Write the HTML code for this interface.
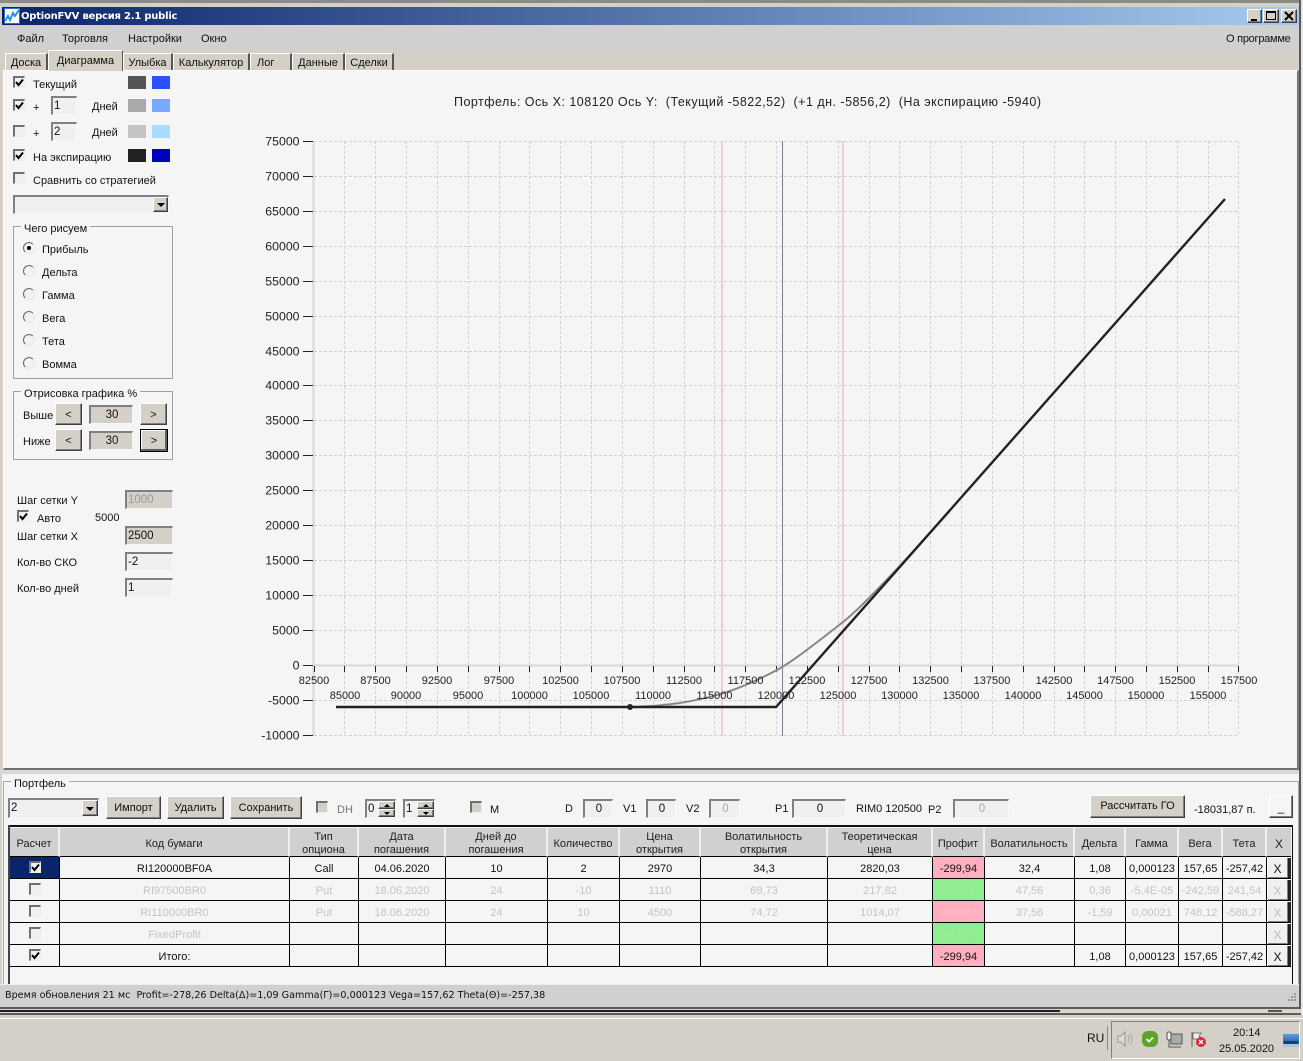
<!DOCTYPE html>
<html><head><meta charset="utf-8"><title>OptionFVV</title>
<style>
html,body{margin:0;padding:0}
body{position:relative;width:1303px;height:1061px;overflow:hidden;background:#d4d0c8;font:11px "Liberation Sans",sans-serif;color:#111}
div,span.a{position:absolute;box-sizing:border-box}
.t{position:absolute;white-space:nowrap;line-height:15px;margin-top:1px}
.in{background:#f0f0f0;border:1px solid #f8f8f8;border-top:2px solid #808080;border-left:2px solid #808080;line-height:17px;padding-left:1px;font-size:11.5px;white-space:nowrap}
.g{background:#d4d0c8}
.btn{background:#d4d0c8;border:1px solid;border-color:#fff #404040 #404040 #fff;box-shadow:inset -1px -1px 0 #808080;text-align:center;white-space:nowrap}
.cb{width:12px;height:12px;background:#f0f0f0;border:1px solid #eee;border-top:2px solid #707070;border-left:2px solid #707070}
.cb svg{position:absolute;left:0;top:0}
.r{width:12px;height:12px;border-radius:50%;background:#f2f2f2;border:1px solid;border-color:#666 #e8e8e8 #e8e8e8 #666}
.tab{top:53px;height:18px;border-top:1px solid #fff;border-left:1px solid #fff;border-right:2px solid #555;text-align:center;line-height:19px;background:#d4d0c8}
.gb{border:1px solid #a0a0a0}
.lg{background:#f5f5f5;padding:0 3px;white-space:nowrap}
table{position:absolute;left:10px;top:828px;border-collapse:separate;border-spacing:0;table-layout:fixed;width:1281px;font-size:11px}
th{font-weight:normal;background:#d0d0d0;height:29px;padding:2px 0 0;border-right:2px solid #f0f0f0;border-bottom:1px solid #000;line-height:13px;box-sizing:border-box;overflow:hidden;color:#222}
th b{font-weight:normal;position:relative;top:1px;display:block}
td{height:22px;padding:2px 0 0;border-right:1px solid #000;border-bottom:1px solid #000;text-align:center;background:#f5f5f5;box-sizing:border-box;white-space:nowrap;overflow:hidden;position:relative}
tr.d td{color:#c4c4c4}
.pk{background:#ffb0c0!important}.gr{background:#90ee90!important}
tr.d td.pk{color:#ffbccb}tr.d td.gr{color:#9eeb9e}
td.x{background:#f0f0f0;border-right:0;border-bottom:1px solid #000;box-shadow:inset 1px 1px 0 #fff,inset -3px 0 0 #222,inset -4px -1px 0 #808080;padding-right:3px;font-size:12px}
tr.d td.x{color:#bbb;background:#f0f0f0}
</style></head><body>

<!-- outer frame -->
<div style="left:0;top:0;width:1303px;height:3px;background:#8a8a86"></div>
<div style="left:0;top:3px;width:1303px;height:3px;background:#d4d0c8"></div>
<div style="left:1299px;top:0;width:2px;height:1018px;background:#5a5a58"></div>
<div style="left:1301px;top:0;width:2px;height:1018px;background:#e8e8e8"></div>
<!-- title -->
<div style="left:2px;top:7px;width:1297px;height:18px;background:linear-gradient(90deg,#0a246a,#a6caf0)"></div>
<svg style="position:absolute;left:4px;top:8px" width="16" height="16"><rect width="16" height="16" fill="#2a6fd8"/><rect x="1" y="1" width="14" height="14" fill="#fff"/><path d="M1 13l3-5 2 4 3-7 2 3 4-6" fill="none" stroke="#2a8fe0" stroke-width="2"/></svg>
<span class="t" style="left:21px;top:10px;color:#fff;font:bold 10px 'DejaVu Sans',sans-serif;letter-spacing:-0.22px">OptionFVV версия 2.1 public</span>
<div class="btn" style="left:1247px;top:9px;width:15px;height:14px"><div style="left:3px;top:9px;width:6px;height:2px;background:#000"></div></div>
<div class="btn" style="left:1263px;top:9px;width:16px;height:14px"><div style="left:2px;top:1px;width:10px;height:9px;border:1px solid #000;border-top-width:2px"></div></div>
<div class="btn" style="left:1281px;top:9px;width:16px;height:14px"><svg style="position:absolute;left:2px;top:1px" width="10" height="10"><path d="M1 1l8 8M9 1l-8 8" stroke="#000" stroke-width="2"/></svg></div>
<!-- menu -->
<div style="left:2px;top:25px;width:1297px;height:25px;background:#d0d0d0"></div>
<span class="t" style="left:17px;top:31px">Файл</span>
<span class="t" style="left:62px;top:31px">Торговля</span>
<span class="t" style="left:128px;top:31px">Настройки</span>
<span class="t" style="left:201px;top:31px">Окно</span>
<span class="t" style="left:1226px;top:31px;letter-spacing:-0.25px">О программе</span>
<!-- tabs -->
<div class="tab" style="left:5px;width:43px">Доска</div>
<div class="tab" style="left:123px;width:50px">Улыбка</div>
<div class="tab" style="left:173px;width:77px">Калькулятор</div>
<div class="tab" style="left:250px;width:42px;text-align:left;padding-left:6px">Лог</div>
<div class="tab" style="left:292px;width:53px">Данные</div>
<div class="tab" style="left:345px;width:49px">Сделки</div>
<div class="tab" style="left:48px;top:50px;width:75px;height:21px;z-index:2;border-right:1px solid #555;line-height:20px">Диаграмма</div>
<!-- main panel -->
<div style="left:3px;top:70px;width:1296px;height:700px;background:#f5f5f5;border-top:1px solid #fff;border-left:1px solid #fff;border-right:2px solid #777;border-bottom:2px solid #707070"></div>

<!-- left controls -->
<div class="cb" style="left:13px;top:76px"><svg width="10" height="10"><path d="M1 4l2.500 3L8 1.500" fill="none" stroke="#000" stroke-width="2"/></svg></div>
<span class="t" style="left:33px;top:77px">Текущий</span>
<div style="left:128px;top:76px;width:18px;height:13px;background:#555"></div><div style="left:152px;top:76px;width:18px;height:13px;background:#2a50ff"></div>

<div class="cb" style="left:13px;top:99px"><svg width="10" height="10"><path d="M1 4l2.500 3L8 1.500" fill="none" stroke="#000" stroke-width="2"/></svg></div>
<span class="t" style="left:33px;top:100px">+</span>
<div class="in" style="left:51px;top:96px;width:26px;height:19px">1</div>
<span class="t" style="left:92px;top:99px">Дней</span>
<div style="left:128px;top:99px;width:18px;height:13px;background:#a9a9a9"></div><div style="left:152px;top:99px;width:18px;height:13px;background:#7aa8ff"></div>

<div class="cb" style="left:13px;top:125px"></div>
<span class="t" style="left:33px;top:126px">+</span>
<div class="in" style="left:51px;top:122px;width:26px;height:19px">2</div>
<span class="t" style="left:92px;top:125px">Дней</span>
<div style="left:128px;top:125px;width:18px;height:13px;background:#c4c4c4"></div><div style="left:152px;top:125px;width:18px;height:13px;background:#aadcff"></div>

<div class="cb" style="left:13px;top:149px"><svg width="10" height="10"><path d="M1 4l2.500 3L8 1.500" fill="none" stroke="#000" stroke-width="2"/></svg></div>
<span class="t" style="left:33px;top:150px">На экспирацию</span>
<div style="left:128px;top:149px;width:18px;height:13px;background:#222"></div><div style="left:152px;top:149px;width:18px;height:13px;background:#0000c0"></div>

<div class="cb" style="left:13px;top:172px"></div>
<span class="t" style="left:33px;top:173px">Сравнить со стратегией</span>
<div class="in" style="left:13px;top:195px;width:156px;height:19px"></div>
<div class="btn" style="left:153px;top:197px;width:15px;height:15px"><div style="left:3px;top:5px;border:4px solid transparent;border-top:4px solid #000;border-bottom:0"></div></div>

<!-- group 1 -->
<div class="gb" style="left:13px;top:226px;width:160px;height:153px"></div>
<div class="lg t" style="left:21px;top:221px">Чего рисуем</div>
<div class="r" style="left:23px;top:242px"><div style="left:3px;top:3px;width:4px;height:4px;border-radius:50%;background:#000"></div></div><span class="t" style="left:42px;top:242px">Прибыль</span>
<div class="r" style="left:23px;top:265px"></div><span class="t" style="left:42px;top:265px">Дельта</span>
<div class="r" style="left:23px;top:288px"></div><span class="t" style="left:42px;top:288px">Гамма</span>
<div class="r" style="left:23px;top:311px"></div><span class="t" style="left:42px;top:311px">Вега</span>
<div class="r" style="left:23px;top:334px"></div><span class="t" style="left:42px;top:334px">Тета</span>
<div class="r" style="left:23px;top:357px"></div><span class="t" style="left:42px;top:357px">Вомма</span>

<!-- group 2 -->
<div class="gb" style="left:13px;top:391px;width:160px;height:69px"></div>
<div class="lg t" style="left:21px;top:386px">Отрисовка графика %</div>
<span class="t" style="left:23px;top:408px">Выше</span>
<div class="btn" style="left:55px;top:403px;width:27px;height:22px;line-height:22px">&lt;</div>
<div class="in g" style="left:89px;top:405px;width:44px;height:19px;text-align:center">30</div>
<div class="btn" style="left:140px;top:403px;width:27px;height:22px;line-height:22px">&gt;</div>
<span class="t" style="left:23px;top:434px">Ниже</span>
<div class="btn" style="left:55px;top:429px;width:27px;height:22px;line-height:22px">&lt;</div>
<div class="in g" style="left:89px;top:431px;width:44px;height:19px;text-align:center">30</div>
<div class="btn" style="left:140px;top:429px;width:28px;height:23px;line-height:22px;border:1px solid #000;box-shadow:inset -2px -2px 0 #606060,inset 1px 1px 0 #fff">&gt;</div>

<span class="t" style="left:17px;top:493px">Шаг сетки Y</span>
<div class="in g" style="left:125px;top:490px;width:48px;height:19px;color:#999">1000</div>
<div class="cb" style="left:17px;top:510px"><svg width="10" height="10"><path d="M1 4l2.500 3L8 1.500" fill="none" stroke="#000" stroke-width="2"/></svg></div>
<span class="t" style="left:37px;top:511px">Авто</span>
<span class="t" style="left:95px;top:510px">5000</span>
<span class="t" style="left:17px;top:529px">Шаг сетки X</span>
<div class="in g" style="left:125px;top:526px;width:48px;height:19px">2500</div>
<span class="t" style="left:17px;top:555px">Кол-во СКО</span>
<div class="in" style="left:125px;top:552px;width:48px;height:19px">-2</div>
<span class="t" style="left:17px;top:581px">Кол-во дней</span>
<div class="in" style="left:125px;top:578px;width:48px;height:19px">1</div>

<!-- chart -->
<svg style="position:absolute;left:0;top:0" width="1303" height="780" font-family="Liberation Sans, sans-serif">
<text x="454" y="106" font-size="12.500" fill="#222" textLength="587" lengthAdjust="spacing" xml:space="preserve">Портфель: Ось X: 108120 Ось Y:  (Текущий -5822,52)  (+1 дн. -5856,2)  (На экспирацию -5940)</text>
<path fill="none" stroke="#d2d2d2" stroke-dasharray="3 2" d="M314 141.500H1239M314 176.500H1239M314 211.500H1239M314 246.500H1239M314 281.500H1239M314 316.500H1239M314 351.500H1239M314 385.500H1239M314 420.500H1239M314 455.500H1239M314 490.500H1239M314 525.500H1239M314 560.500H1239M314 595.500H1239M314 630.500H1239M314 700.500H1239M314 735.500H1239
M344.500 141V735M375.500 141V735M406.500 141V735M437.500 141V735M468.500 141V735M499.500 141V735M529.500 141V735M560.500 141V735M591.500 141V735M622.500 141V735M653.500 141V735M684.500 141V735M714.500 141V735M745.500 141V735M776.500 141V735M807.500 141V735M838.500 141V735M869.500 141V735M899.500 141V735M930.500 141V735M961.500 141V735M992.500 141V735M1023.500 141V735M1054.500 141V735M1084.500 141V735M1115.500 141V735M1146.500 141V735M1177.500 141V735M1208.500 141V735M1238.500 141V735"/>
<path stroke="#d8d8d8" stroke-width="2" d="M313.500 141V736M313 665.500H1239"/>
<path stroke="#222" fill="none" d="M303 141.500h10M303 176.500h10M303 211.500h10M303 246.500h10M303 281.500h10M303 316.500h10M303 351.500h10M303 385.500h10M303 420.500h10M303 455.500h10M303 490.500h10M303 525.500h10M303 560.500h10M303 595.500h10M303 630.500h10M303 665.500h10M303 700.500h10M303 735.500h10
M314.500 666v6M344.500 666v6M375.500 666v6M406.500 666v6M437.500 666v6M468.500 666v6M499.500 666v6M529.500 666v6M560.500 666v6M591.500 666v6M622.500 666v6M653.500 666v6M684.500 666v6M714.500 666v6M745.500 666v6M776.500 666v6M807.500 666v6M838.500 666v6M869.500 666v6M899.500 666v6M930.500 666v6M961.500 666v6M992.500 666v6M1023.500 666v6M1054.500 666v6M1084.500 666v6M1115.500 666v6M1146.500 666v6M1177.500 666v6M1208.500 666v6M1238.500 666v6"/>
<g font-size="12.300" text-anchor="end" fill="#222" transform="translate(0,-0.5)">
<text x="299.500" y="146">75000</text><text x="299.500" y="181">70000</text><text x="299.500" y="216">65000</text><text x="299.500" y="251">60000</text><text x="299.500" y="286">55000</text><text x="299.500" y="321">50000</text><text x="299.500" y="356">45000</text><text x="299.500" y="390">40000</text><text x="299.500" y="425">35000</text><text x="299.500" y="460">30000</text><text x="299.500" y="495">25000</text><text x="299.500" y="530">20000</text><text x="299.500" y="565">15000</text><text x="299.500" y="600">10000</text><text x="299.500" y="635">5000</text><text x="299.500" y="670">0</text><text x="299.500" y="705">-5000</text><text x="299.500" y="740">-10000</text>
</g>
<path d="M722 141V736M843 141V736" stroke="#f4ccd6" stroke-width="2"/>
<path d="M782.500 141V736" stroke="#7d8094" stroke-width="1"/>
<path d="M630 707C670 706 695 701 717 695S760 679 777 670S825 636 843 622S905 561 950 510.500" fill="none" stroke="#a8a8a8" stroke-width="2.200"/>
<path d="M630 707C670 706 695 701 717 695S760 679 777 670S825 636 843 622S905 561 950 510.500" fill="none" stroke="#707070" stroke-width="0.800"/>
<path d="M336 707H776L1225 199" fill="none" stroke="#222" stroke-width="2.400"/>
<circle cx="630" cy="707" r="3" fill="#222"/>
<g font-size="11" text-anchor="middle" fill="#222">
<text x="314" y="684">82500</text><text x="375.500" y="684">87500</text><text x="437" y="684">92500</text><text x="499" y="684">97500</text><text x="560.500" y="684">102500</text><text x="622" y="684">107500</text><text x="684" y="684">112500</text><text x="745.500" y="684">117500</text><text x="807" y="684">122500</text><text x="869" y="684">127500</text><text x="930.500" y="684">132500</text><text x="992" y="684">137500</text><text x="1054" y="684">142500</text><text x="1115.500" y="684">147500</text><text x="1177" y="684">152500</text><text x="1239" y="684">157500</text>
<text x="345" y="699">85000</text><text x="406" y="699">90000</text><text x="468" y="699">95000</text><text x="529.500" y="699">100000</text><text x="591" y="699">105000</text><text x="653" y="699">110000</text><text x="714.500" y="699">115000</text><text x="776" y="699">120000</text><text x="838" y="699">125000</text><text x="899.500" y="699">130000</text><text x="961" y="699">135000</text><text x="1023" y="699">140000</text><text x="1084.500" y="699">145000</text><text x="1146" y="699">150000</text><text x="1208" y="699">155000</text>
</g>
</svg>

<!-- portfolio -->
<div style="left:0;top:770px;width:1299px;height:4px;background:#d8d8d8"></div>
<div style="left:2px;top:774px;width:1297px;height:211px;background:#f5f5f5"></div>
<div style="left:3px;top:781px;width:1296px;height:204px;border-top:1px solid #a8a8a8;border-left:1px solid #a8a8a8;border-right:1px solid #a8a8a8"></div>
<div class="lg t" style="left:11px;top:776px">Портфель</div>

<div class="in" style="left:8px;top:798px;width:91px;height:20px">2</div>
<div class="btn" style="left:82px;top:800px;width:16px;height:16px"><div style="left:3px;top:6px;border:4px solid transparent;border-top:4px solid #000;border-bottom:0"></div></div>
<div class="btn" style="left:106px;top:796px;width:55px;height:23px;line-height:22px">Импорт</div>
<div class="btn" style="left:167px;top:796px;width:57px;height:23px;line-height:22px">Удалить</div>
<div class="btn" style="left:230px;top:796px;width:72px;height:23px;line-height:22px">Сохранить</div>
<div class="cb" style="left:316px;top:801px;background:#d4d0c8"></div>
<span class="t" style="left:337px;top:802px;color:#777">DH</span>
<div class="in" style="left:365px;top:799px;width:31px;height:19px">0</div>
<div class="btn" style="left:378px;top:801px;width:17px;height:8px"><div style="left:5px;top:2px;border:3px solid transparent;border-bottom:3px solid #000;border-top:0"></div></div>
<div class="btn" style="left:378px;top:809px;width:17px;height:8px"><div style="left:5px;top:2px;border:3px solid transparent;border-top:3px solid #000;border-bottom:0"></div></div>
<div class="in" style="left:403px;top:799px;width:32px;height:19px">1</div>
<div class="btn" style="left:417px;top:801px;width:17px;height:8px"><div style="left:5px;top:2px;border:3px solid transparent;border-bottom:3px solid #000;border-top:0"></div></div>
<div class="btn" style="left:417px;top:809px;width:17px;height:8px"><div style="left:5px;top:2px;border:3px solid transparent;border-top:3px solid #000;border-bottom:0"></div></div>
<div class="cb" style="left:470px;top:801px;background:#d4d0c8"></div>
<span class="t" style="left:490px;top:802px">M</span>
<span class="t" style="left:565px;top:801px">D</span>
<div class="in" style="left:583px;top:799px;width:30px;height:19px;text-align:center">0</div>
<span class="t" style="left:623px;top:801px">V1</span>
<div class="in" style="left:646px;top:799px;width:30px;height:19px;text-align:center">0</div>
<span class="t" style="left:686px;top:801px">V2</span>
<div class="in" style="left:709px;top:799px;width:31px;height:19px;text-align:center;color:#aaa">0</div>
<span class="t" style="left:775px;top:801px">P1</span>
<div class="in" style="left:792px;top:799px;width:54px;height:19px;text-align:center">0</div>
<span class="t" style="left:856px;top:801px">RIM0 120500</span>
<span class="t" style="left:928px;top:802px">P2</span>
<div class="in" style="left:953px;top:799px;width:56px;height:19px;text-align:center;color:#aaa">0</div>
<div class="btn" style="left:1090px;top:795px;width:95px;height:23px;line-height:21px">Рассчитать ГО</div>
<span class="t" style="left:1194px;top:802px">-18031,87 п.</span>
<div class="btn" style="left:1269px;top:795px;width:24px;height:23px;background:#f5f5f5;line-height:22px;font-size:12px">_</div>

<!-- table frame -->
<div style="left:9px;top:825px;width:1284px;height:2px;background:#111"></div>
<div style="left:8px;top:825px;width:2px;height:160px;background:#444"></div>
<div style="left:1292px;top:825px;width:1px;height:160px;background:#111"></div>
<table>
<colgroup><col style="width:50px"><col style="width:230px"><col style="width:69px"><col style="width:87px"><col style="width:102px"><col style="width:72px"><col style="width:81px"><col style="width:127px"><col style="width:105px"><col style="width:52px"><col style="width:90px"><col style="width:51px"><col style="width:53px"><col style="width:44px"><col style="width:44px"><col style="width:24px"></colgroup>
<tr><th><b>Расчет</b></th><th><b>Код бумаги</b></th><th><b>Тип<br>опциона</b></th><th><b>Дата<br>погашения</b></th><th><b>Дней до<br>погашения</b></th><th><b>Количество</b></th><th><b>Цена<br>открытия</b></th><th><b>Волатильность<br>открытия</b></th><th><b>Теоретическая<br>цена</b></th><th><b>Профит</b></th><th><b>Волатильность</b></th><th><b>Дельта</b></th><th><b>Гамма</b></th><th><b>Вега</b></th><th><b>Тета</b></th><th style="border-right:0;font-size:12px"><b>X</b></th></tr>
<tr><td style="background:#0a246a"><div class="cb" style="left:19px;top:4px;background:#f0f0f0"><svg width="10" height="10"><path d="M1 4l2.500 3L8 1.500" fill="none" stroke="#000" stroke-width="2"/></svg></div></td><td>RI120000BF0A</td><td>Call</td><td>04.06.2020</td><td>10</td><td>2</td><td>2970</td><td>34,3</td><td>2820,03</td><td class="pk">-299,94</td><td>32,4</td><td>1,08</td><td>0,000123</td><td>157,65</td><td>-257,42</td><td class="x">X</td></tr>
<tr class="d"><td><div class="cb" style="left:19px;top:4px"></div></td><td>RI97500BR0</td><td>Put</td><td>18.06.2020</td><td>24</td><td>-10</td><td>1110</td><td>69,73</td><td>217,82</td><td class="gr">8501,8</td><td>47,56</td><td>0,36</td><td>-5,4E-05</td><td>-242,59</td><td>241,54</td><td class="x">X</td></tr>
<tr class="d"><td><div class="cb" style="left:19px;top:4px"></div></td><td>RI110000BR0</td><td>Put</td><td>18.06.2020</td><td>24</td><td>10</td><td>4500</td><td>74,72</td><td>1014,07</td><td class="pk">-34859,3</td><td>37,56</td><td>-1,59</td><td>0,00021</td><td>748,12</td><td>-588,27</td><td class="x">X</td></tr>
<tr class="d"><td><div class="cb" style="left:19px;top:4px"></div></td><td>FixedProfit</td><td></td><td></td><td></td><td></td><td></td><td></td><td></td><td class="gr">14790</td><td></td><td></td><td></td><td></td><td></td><td class="x">X</td></tr>
<tr><td><div class="cb" style="left:19px;top:4px"><svg width="10" height="10"><path d="M1 4l2.500 3L8 1.500" fill="none" stroke="#000" stroke-width="2"/></svg></div></td><td>Итого:</td><td></td><td></td><td></td><td></td><td></td><td></td><td></td><td class="pk">-299,94</td><td></td><td>1,08</td><td>0,000123</td><td>157,65</td><td>-257,42</td><td class="x">X</td></tr>
</table>

<!-- status bar -->
<div style="left:0;top:984px;width:1299px;height:23px;background:#d0d0d0;border-top:1px solid #eee"></div>
<span class="t" style="left:5px;top:988px;font:9.6px 'DejaVu Sans',sans-serif;line-height:13px">Время обновления 21 мс&nbsp; Profit=-278,26 Delta(Δ)=1,09 Gamma(Γ)=0,000123 Vega=157,62 Theta(Θ)=-257,38</span>
<svg style="position:absolute;left:1284px;top:991px" width="14" height="14"><path d="M10 2h2v2h-2zM7 5h2v2H7zM10 5h2v2h-2zM4 8h2v2H4zM7 8h2v2H7zM10 8h2v2h-2z" fill="#9a9a9a"/></svg>

<!-- bottom strip -->
<div style="left:0;top:1007px;width:1301px;height:2px;background:#5c5c58"></div>
<div style="left:0;top:1009px;width:1301px;height:4px;background:#d8d8d0"></div>
<div style="left:0;top:1010px;width:1060px;height:2px;background:#222"></div>
<div style="left:1268px;top:1010px;width:14px;height:2px;background:#555"></div>
<div style="left:0;top:1013px;width:1301px;height:2px;background:#5c5c58"></div>
<div style="left:0;top:1015px;width:1303px;height:3px;background:#d4d0c8"></div>
<div style="left:0;top:1018px;width:1303px;height:1px;background:#fff"></div>

<!-- taskbar -->
<span class="t" style="left:1087px;top:1030px;font-size:12px">RU</span>
<div style="left:1107px;top:1026px;width:1px;height:24px;background:#888"></div>
<div style="left:1111px;top:1021px;width:189px;height:38px;border:1px solid;border-color:#808080 #fff #fff #808080"></div>
<svg style="position:absolute;left:1116px;top:1030px" width="18" height="18"><path d="M2 6h3l4-4v14l-4-4H2z" fill="#ddd" stroke="#999"/><path d="M12 5q2 4 0 8M14.500 3q3 6 0 12" fill="none" stroke="#aaa"/></svg>
<svg style="position:absolute;left:1142px;top:1031px" width="16" height="16"><rect x="0" y="0" width="16" height="16" rx="6" fill="#5da32c"/><path d="M4.500 8l2.500 2.500 4-4" fill="none" stroke="#fff" stroke-width="1.800"/></svg>
<svg style="position:absolute;left:1166px;top:1031px" width="18" height="18"><rect x="5" y="3" width="11" height="10" fill="#aaa" stroke="#555"/><rect x="1" y="1" width="4" height="8" rx="1.500" fill="#eee" stroke="#555"/><path d="M3 9v7h12" fill="none" stroke="#555"/></svg>
<svg style="position:absolute;left:1190px;top:1031px" width="18" height="18"><path d="M2 1v15" stroke="#666"/><path d="M3 2h8l-2 3 3 3H3z" fill="#eee" stroke="#777"/><circle cx="11" cy="11" r="5" fill="#d8283a"/><path d="M9 9l4 4M13 9l-4 4" stroke="#fff" stroke-width="1.300"/></svg>
<span class="t" style="left:1233px;top:1025px">20:14</span>
<span class="t" style="left:1219px;top:1041px">25.05.2020</span>
<svg style="position:absolute;left:1283px;top:1034px" width="16" height="14"><defs><linearGradient id="m" x1="0" y1="0" x2="0" y2="1"><stop offset="0" stop-color="#5aa0e8"/><stop offset="1" stop-color="#1c5c9c"/></linearGradient></defs><rect width="16" height="10" fill="url(#m)"/><rect x="1" y="7" width="14" height="3" fill="#16406e"/><rect x="0" y="10" width="16" height="3" fill="#a8c4e0"/></svg>
</body></html>
